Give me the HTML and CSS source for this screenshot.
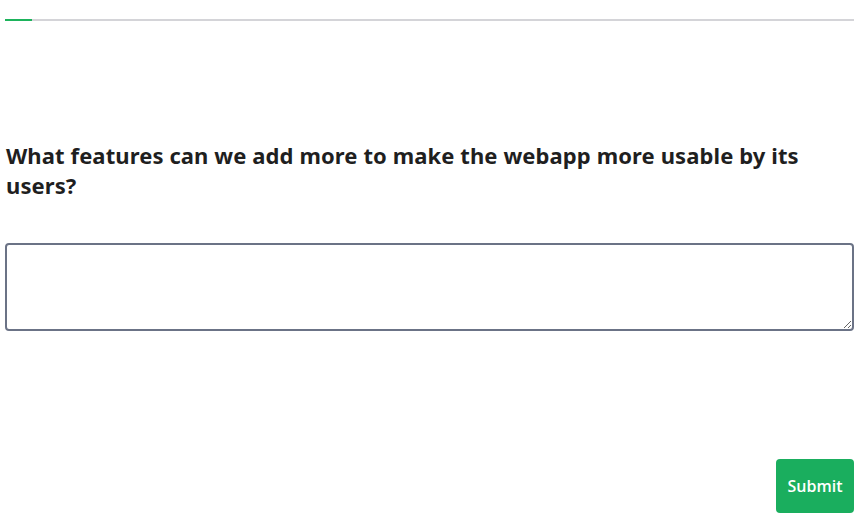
FILE: index.html
```html
<!DOCTYPE html>
<html lang="en">
<head>
<meta charset="utf-8">
<title>Survey</title>
<link rel="stylesheet" href="styles.css">
</head>
<body>
<div class="page">
  <div class="progress"><div class="progress-fill" style="width:27px"></div></div>
  <form class="question">
    <label class="question-title" for="answer">What features can we add more to make the webapp more usable by its users?</label>
    <textarea id="answer" class="answer"></textarea>
    <div class="actions">
      <button type="button" class="submit">Submit</button>
    </div>
  </form>
</div>
</body>
</html>
```
FILE: styles.css
```css
html, body {
  margin: 0;
  padding: 0;
  background: #ffffff;
}
.page {
  padding: 19px 8px 0 5px;
  font-family: "Noto Sans", "Open Sans", sans-serif;
}
.progress {
  height: 2px;
  background: #d4d4d8;
}
.progress-fill {
  height: 100%;
  background: #1db35c;
}
.question {
  display: flex;
  flex-direction: column;
  padding-top: 119px;
}
.question-title {
  display: block;
  font-size: 22px;
  font-weight: 700;
  line-height: 30px;
  letter-spacing: 0.1px;
  color: #1f1f1f;
  padding-left: 1px;
}
.answer {
  margin-top: 43px;
  height: 88px;
  box-sizing: border-box;
  border: 2px solid #6b7386;
  border-radius: 4px;
  resize: vertical;
  font-family: inherit;
  font-size: 16px;
}
.actions {
  display: flex;
  justify-content: flex-end;
  margin-top: 128px;
}
.submit {
  width: 78px;
  height: 54px;
  border: none;
  border-radius: 4px;
  background: #1aae5e;
  color: #ffffff;
  font-family: "Open Sans", sans-serif;
  font-size: 16px;
  font-weight: 600;
}
```
